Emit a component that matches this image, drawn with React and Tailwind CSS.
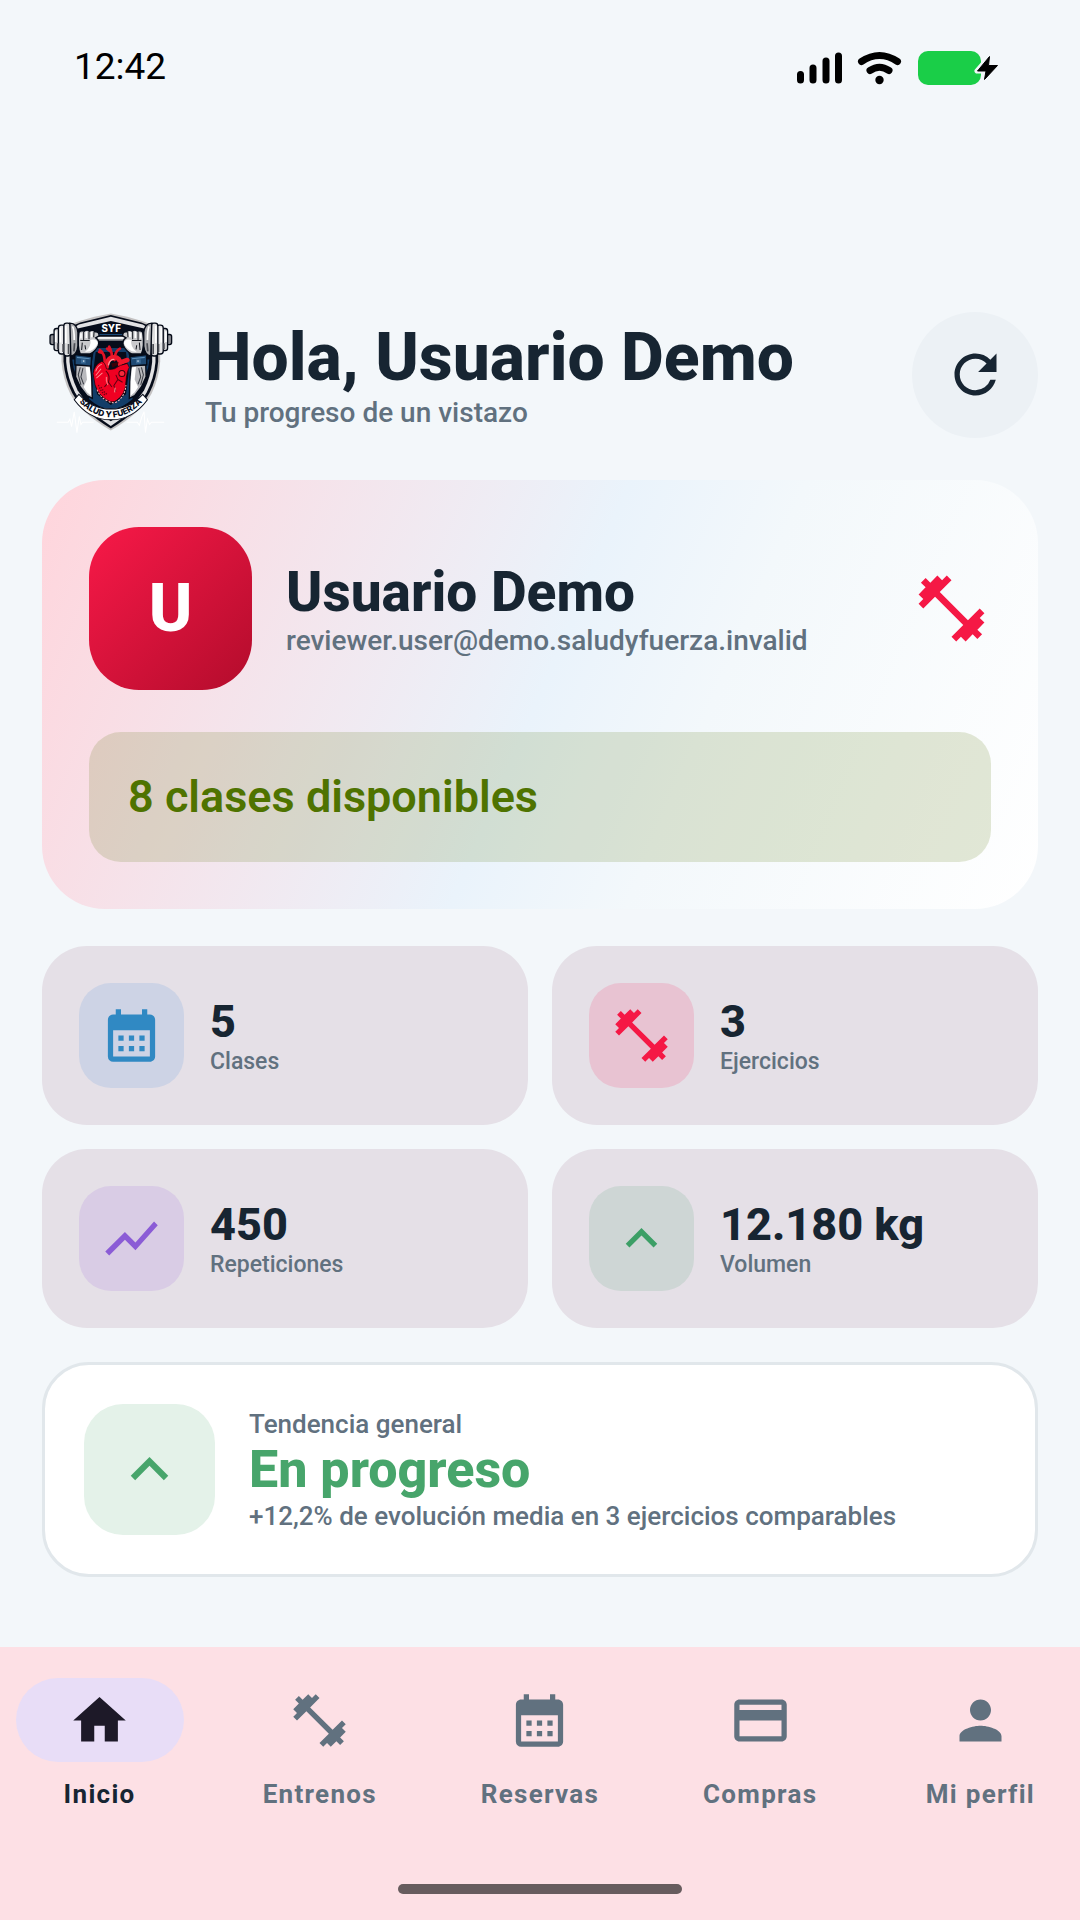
import React, { useState } from "react";
import {
  MdCalendarMonth,
  MdCreditCard,
  MdFitnessCenter,
  MdHome,
  MdKeyboardArrowUp,
  MdPerson,
  MdRefresh,
  MdShowChart,
} from "react-icons/md";

const stats = [
  { value: "5", label: "Clases", icon: MdCalendarMonth, box: "bg-[#cdd3e5]", color: "text-[#3089c3]" },
  { value: "3", label: "Ejercicios", icon: MdFitnessCenter, box: "bg-[#e8c3d2]", color: "text-[#f51845]" },
  { value: "450", label: "Repeticiones", icon: MdShowChart, box: "bg-[#d9cce5]", color: "text-[#8b5cd6]" },
  { value: "12.180 kg", label: "Volumen", icon: MdKeyboardArrowUp, box: "bg-[#ced6d5]", color: "text-[#3c9f66]" },
];

const tabs = [
  { id: "inicio", label: "Inicio", icon: MdHome },
  { id: "entrenos", label: "Entrenos", icon: MdFitnessCenter },
  { id: "reservas", label: "Reservas", icon: MdCalendarMonth },
  { id: "compras", label: "Compras", icon: MdCreditCard },
  { id: "perfil", label: "Mi perfil", icon: MdPerson },
];

// Left half of the emblem, mirrored for the right side
function LogoArm() {
  return (
    <g>
      {/* forearm */}
      <path d="M137 196 L180 196 L184 232 L186 296 L170 288 L150 262 L136 232 Z" fill="#b9b9bd" stroke="#050b18" strokeWidth="4" />
      <path d="M166 202 L178 204 L182 246 L182 288 L170 278 L160 262 L170 240 Z" fill="#fff" />
      <path d="M150 204 L144 226 L152 256 M158 206 L152 232 L160 254" fill="none" stroke="#3a3d45" strokeWidth="3" />
      {/* wristband */}
      <path d="M134 166 L184 172 L182 200 L134 196 Z" fill="#1f4a74" stroke="#050b18" strokeWidth="4" />
      <path d="M140 174 L178 178" stroke="#5f8fb8" strokeWidth="3" />
      <rect x="152" y="180" width="14" height="12" fill="#3d6d98" />
      <rect x="158" y="183" width="4" height="4" fill="#d7e3ee" />
      {/* fist */}
      <path d="M146 100 Q150 92 162 96 Q170 90 178 96 Q188 90 194 98 Q206 96 206 110 L196 116 Q208 124 204 138 Q196 156 178 164 L150 164 Q140 140 146 100 Z" fill="#c9c9cc" stroke="#050b18" strokeWidth="4" />
      <path d="M180 122 Q200 118 202 132 Q196 148 178 156 L164 158 Q184 142 180 122 Z" fill="#fff" />
      <path d="M152 102 L152 118 M168 98 L168 116 M184 98 L184 114" stroke="#fff" strokeWidth="5" />
      <path d="M160 98 L160 122 M176 96 L176 120 M191 98 L190 114 M150 124 L178 124 M156 130 L154 152 M164 138 L166 150" stroke="#15181f" strokeWidth="3" fill="none" />
      {/* weight plates */}
      <rect x="60" y="106" width="16" height="30" rx="6" fill="#8a8b90" stroke="#050b18" strokeWidth="4" />
      <rect x="72" y="88" width="18" height="66" rx="7" fill="#d4d4d6" stroke="#050b18" strokeWidth="4" />
      <rect x="85" y="78" width="20" height="86" rx="8" fill="#e6e6e8" stroke="#050b18" strokeWidth="4" />
      <rect x="101" y="72" width="20" height="98" rx="8" fill="#dededf" stroke="#050b18" strokeWidth="4" />
      <path d="M119 72 Q140 72 143 100 L143 140 Q140 166 122 170 Z" fill="#a9aaae" stroke="#050b18" strokeWidth="4" />
      <path d="M77 96 L77 128 M91 86 L91 130 M107 80 L107 132 M127 82 Q132 92 132 122" stroke="#fff" strokeWidth="5" fill="none" />
      <path d="M83 132 L83 150 M99 134 L99 158 M115 134 L115 164 M133 132 L131 156" stroke="#4a4c53" strokeWidth="5" fill="none" />
    </g>
  );
}

function Logo() {
  return (
    <svg viewBox="36 21 408 408" className="size-[137px] shrink-0" role="img" aria-label="Salud y Fuerza">
      {/* heartbeat lines */}
      <path d="M80 367 H114 L119 358 L124 380 L132 336 L140 398 L147 350 L152 374 L157 367 H190" fill="none" stroke="#fff" strokeWidth="3" />
      <path d="M288 367 H320 L326 376 L333 352 L340 336 L344 398 L350 358 L356 374 L362 367 H400" fill="none" stroke="#fff" strokeWidth="3" />
      {/* shield */}
      <path d="M241 43 L290 53 L334 66 L388 84 L388 186 Q384 238 362 282 Q334 336 241 392 Q148 336 120 282 Q98 238 94 186 L94 84 L148 66 L192 53 Z" fill="#c4c2c2" />
      <path d="M241 48 L332 70 L382 92 L382 186 Q378 236 356 280 Q328 332 241 386 Q154 332 126 280 Q104 236 100 186 L100 92 L150 70 Z" fill="#060c1a" />
      <path d="M241 53 L336 76 L374 100 L374 188 Q370 236 348 278 Q322 326 241 378 Q160 326 134 278 Q112 236 108 188 L108 100 L146 76 Z" fill="#e2e2e4" />
      <path d="M241 66 L340 88 L364 110 L364 188 Q360 232 340 272 Q312 320 241 364 Q170 320 142 272 Q122 232 118 188 L118 110 L142 88 Z" fill="#060c1a" />
      <path d="M126 180 L146 180 L138 228 Q128 206 126 180 Z M356 180 L336 180 L344 228 Q354 206 356 180 Z" fill="#123d68" />
      {/* navy backdrop of the heart */}
      <path d="M192 146 L290 146 L300 190 L298 262 L306 298 Q270 330 241 326 Q212 330 176 298 L186 262 L184 190 Z" fill="#123d68" />
      <path d="M196 158 L286 158 L294 220 L286 284 L241 316 L200 284 L188 220 Z" fill="#060c1a" />
      {/* bar */}
      <path d="M200 106 H282" stroke="#1b4a7a" strokeWidth="3" />
      <rect x="196" y="111" width="90" height="14" fill="#f4f4f5" stroke="#060c1a" strokeWidth="3" />
      <path d="M200 121 H282" stroke="#9a9ca1" strokeWidth="4" />
      <LogoArm />
      <g transform="translate(482 0) scale(-1 1)">
        <LogoArm />
      </g>
      {/* heart */}
      <g strokeLinecap="round" fill="none">
        <path d="M222 196 Q226 164 208 152 M214 160 L206 158 M244 180 Q246 160 236 142 M252 182 Q252 156 268 148 M240 156 L230 148" stroke="#e01226" strokeWidth="8" />
        <path d="M228 204 Q230 174 250 174 Q270 174 268 194 M268 190 L290 182" stroke="#f0182c" strokeWidth="14" />
        <path d="M234 196 Q238 180 250 180" stroke="#ff9a9f" strokeWidth="4" />
      </g>
      <path d="M214 186 Q192 196 188 222 L194 256 Q204 286 228 300 Q246 312 258 302 Q286 284 286 246 Q288 218 296 204 L290 192 Q268 196 252 208 Q238 212 228 208 Q224 188 214 186 Z" fill="#f00022" stroke="#14040a" strokeWidth="2" />
      <path d="M200 270 Q208 292 230 303 Q248 313 260 306 Q284 288 286 256" fill="none" stroke="#ffb9b9" strokeWidth="3" strokeDasharray="6 4" />
      <path d="M196 216 Q200 200 214 194 M196 228 L212 208 M198 236 L216 220" stroke="#ff8b8f" strokeWidth="3" fill="none" />
      <path d="M242 192 L264 188 L262 196 L246 204 Z" fill="#3d0009" />
      <circle cx="274" cy="222" r="9" fill="#f52a3c" stroke="#3d0009" strokeWidth="3" />
      <path d="M226 214 Q240 226 234 248 L244 262 M234 248 L222 262 M262 240 L250 258 L256 276 M262 240 L276 248 M262 240 L256 226" fill="none" stroke="#5a0010" strokeWidth="3" />
      <path d="M204 256 Q210 276 226 288 M212 262 Q218 276 232 286" fill="none" stroke="#730014" strokeWidth="4" strokeDasharray="4 4" />
      <path d="M228 232 Q226 246 232 256 M254 264 L252 278" stroke="#ff6d76" strokeWidth="4" fill="none" />
      {/* ribbon */}
      <path d="M146 284 Q186 328 241 328 Q296 328 336 284 L350 300 Q306 360 241 360 Q176 360 132 300 Z" fill="#fff" stroke="#060c1a" strokeWidth="3" />
      <path id="ribbon" d="M134 292 Q182 352 241 353 Q300 352 348 292" fill="none" />
      <text fontFamily="Inter, sans-serif" fontSize="25" fontWeight="800" fill="#060c1a" textAnchor="middle">
        <textPath href="#ribbon" startOffset="50%">SALUD Y FUERZA</textPath>
      </text>
      <text x="242" y="98" fontFamily="Inter, sans-serif" fontSize="29" fontWeight="800" fill="#fff" textAnchor="middle">SYF</text>
    </svg>
  );
}

function StatusBar() {
  return (
    <div className="flex items-center justify-between pt-[43px] pl-[74px] pr-[80px] text-black">
      <span className="text-[37px] leading-[48px]">12:42</span>
      <svg viewBox="0 0 204 40" className="h-10 w-[204px]" aria-hidden="true">
        <g stroke="#000" strokeWidth="7" strokeLinecap="round">
          <path d="M4.500 27.500 V33 M17 21 V33 M30 14 V33 M42.500 9 V33" />
        </g>
        <g fill="none" stroke="#000" strokeLinecap="round" strokeWidth="7">
          <path d="M65.500 14.500 Q83.500 2.500 101.500 14.500" />
          <path d="M74 23.500 Q83.500 17 93 23.500" />
        </g>
        <circle cx="83.500" cy="33" r="4.200" />
        <rect x="122" y="4" width="63" height="34" rx="10" fill="#1ace48" />
        <path d="M194 9 L181 24 H190 L188 33.500 L202 18 H192.500 Z" stroke="#f3f7fa" strokeWidth="5" strokeLinejoin="round" fill="#f3f7fa" />
        <path d="M193.500 9.500 L181.500 24 H190 L188.500 32.500 L201.500 18.500 H192.500 Z" stroke="#000" strokeWidth="1" strokeLinejoin="round" />
      </svg>
    </div>
  );
}

export default function App() {
  const [activeTab, setActiveTab] = useState("inicio");

  return (
    <div className="flex min-h-screen flex-col bg-[#f3f7fa] font-[Roboto,sans-serif] text-[#172532]">
      <StatusBar />

      <main className="flex flex-col px-[42px] pt-[215px] pb-[70px]">
        <header className="flex items-center">
          <Logo />
          <div className="ml-[26px] min-w-0 flex-1 pt-1">
            <h1 className="text-[66px] leading-[72px] font-extrabold">Hola, Usuario Demo</h1>
            <p className="text-[28px] leading-[38px] font-medium text-[#61717f]">Tu progreso de un vistazo</p>
          </div>
          <button type="button" aria-label="Actualizar" className="flex size-[126px] items-center justify-center rounded-full bg-[#ecf1f5]">
            <MdRefresh className="size-[63px]" />
          </button>
        </header>

        <section className="mt-[37px] rounded-[63px] bg-[linear-gradient(113deg,#ffd5dc,#eaf3fb_50%,#f3f8fb_65%,#ffffff)] p-[47px]">
          <div className="flex items-center">
            <div className="flex size-[163px] shrink-0 items-center justify-center rounded-[50px] bg-[linear-gradient(135deg,#f81948,#b30c2c)] text-[66px] font-extrabold text-white">
              U
            </div>
            <div className="ml-[34px] min-w-0 flex-1 pt-1">
              <h2 className="text-[55px] leading-[60px] font-extrabold">Usuario Demo</h2>
              <p className="text-[28px] leading-[38px] font-medium text-[#61717f]">reviewer.user@demo.saludyfuerza.invalid</p>
            </div>
            <MdFitnessCenter className="size-[79px] text-[#f51845]" />
          </div>
          <p className="mt-[42px] rounded-[32px] bg-[#4f7300]/16 px-[39px] py-[37px] text-[45px] leading-[56px] font-semibold text-[#4f7300]">
            8 clases disponibles
          </p>
        </section>

        <section className="mt-[37px] grid grid-cols-2 gap-6">
          {stats.map((stat) => (
            <div key={stat.label} className="flex items-center rounded-[45px] bg-[#e5e0e7] p-[37px]">
              <div className={`flex size-[105px] items-center justify-center rounded-[32px] ${stat.box} ${stat.color}`}>
                <stat.icon className="size-[63px]" />
              </div>
              <div className="ml-[26px] pt-1">
                <p className="text-[45px] leading-[48px] font-extrabold">{stat.value}</p>
                <p className="text-[23px] leading-[32px] font-medium text-[#61717f]">{stat.label}</p>
              </div>
            </div>
          ))}
        </section>

        <section className="mt-[34px] flex items-center rounded-[47px] border-3 border-[#e1e7eb] bg-white p-[39px]">
          <div className="flex size-[131px] shrink-0 items-center justify-center rounded-[39px] bg-[#e4f2e9] text-[#47a56b]">
            <MdKeyboardArrowUp className="size-[75px]" />
          </div>
          <div className="ml-[34px]">
            <p className="text-[26px] leading-[34px] font-medium text-[#61717f]">Tendencia general</p>
            <p className="text-[52px] leading-[58px] font-extrabold text-[#47a56b]">En progreso</p>
            <p className="text-[26px] leading-[34px] font-medium text-[#61717f]">+12,2% de evolución media en 3 ejercicios comparables</p>
          </div>
        </section>
      </main>

      <nav className="mt-auto bg-[#fde0e5] pt-[31px]">
        <div className="grid grid-cols-5 gap-[21px]">
          {tabs.map((tab) => {
            const active = tab.id === activeTab;
            return (
              <button
                key={tab.id}
                type="button"
                onClick={() => setActiveTab(tab.id)}
                className={`flex flex-col items-center ${active ? "text-[#172532]" : "text-[#61717f]"}`}
              >
                <span className={`flex h-[84px] w-[168px] items-center justify-center rounded-full ${active ? "bg-[#e8ddf7] text-[#1d1928]" : ""}`}>
                  <tab.icon className="size-[63px]" />
                </span>
                <span className="mt-[14px] text-[26px] leading-[36px] font-bold tracking-wider">{tab.label}</span>
              </button>
            );
          })}
        </div>
        <div className="mx-auto mt-[72px] mb-[26px] h-[10px] w-[284px] rounded-full bg-[#675c5e]" />
      </nav>
    </div>
  );
}
